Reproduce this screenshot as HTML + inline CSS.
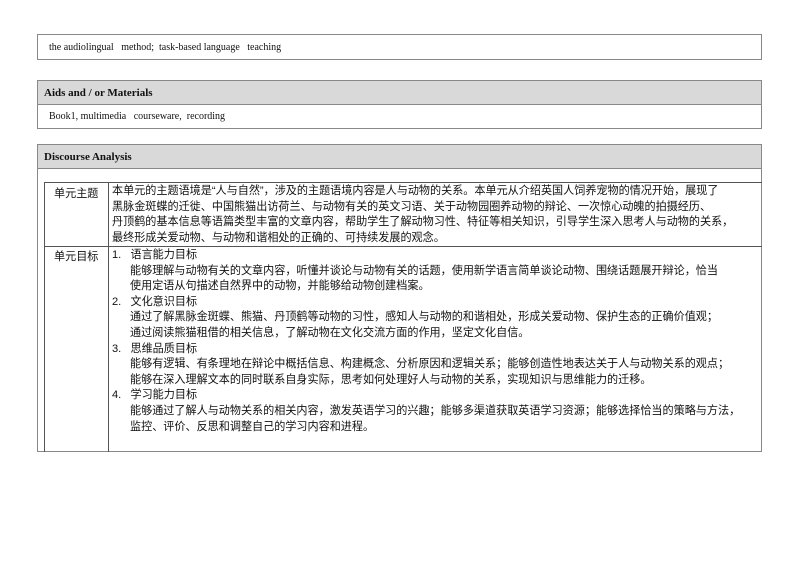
<!DOCTYPE html>
<html><head><meta charset="utf-8"><style>
body{margin:0;width:794px;height:561px;background:#fff;position:relative;font-family:"Liberation Serif","Noto Sans CJK SC",serif;color:#111}
.box{position:absolute;left:37px;width:725px;border:1px solid #888;box-sizing:border-box}
.hd{background:#d9d9d9;font-weight:bold;font-size:11px;padding-left:6px;border-bottom:1px solid #888;box-sizing:border-box}
.t{font-size:10px;padding-left:11px}
.cj{font-family:"Liberation Sans","Noto Sans CJK SC",sans-serif;font-size:11.1px;line-height:15.6px;color:#111}
.a{position:absolute}
</style></head><body>
<div class="box" style="top:34px;height:26px"><div class="t" style="line-height:25px">the audiolingual &nbsp; method; &nbsp;task-based language &nbsp; teaching</div></div>
<div class="box" style="top:80px;height:49px"><div class="hd" style="height:24px;line-height:25px">Aids and / or Materials</div><div class="t" style="line-height:24px">Book1, multimedia &nbsp; courseware, &nbsp;recording</div></div>
<div class="box" style="top:144px;height:308px">
<div class="hd" style="height:24px;line-height:24px">Discourse Analysis</div>
</div>
<div class="a" style="left:44px;top:182px;width:718px;height:270px;border-left:1px solid #555;border-top:1px solid #555;box-sizing:border-box"></div>
<div class="a" style="left:44px;top:246px;width:718px;border-top:1px solid #555"></div>
<div class="a" style="left:108px;top:182px;height:270px;border-left:1px solid #555"></div>
<div class="a cj" style="left:54px;top:187px">单元主题</div>
<div class="a cj" style="left:54px;top:250px">单元目标</div>
<div class="a cj" style="left:112px;top:184px;width:650px">本单元的主题语境是“人与自然”，涉及的主题语境内容是人与动物的关系。本单元从介绍英国人饲养宠物的情况开始，展现了<br>黑脉金斑蝶的迁徙、中国熊猫出访荷兰、与动物有关的英文习语、关于动物园圈养动物的辩论、一次惊心动魄的拍摄经历、<br>丹顶鹤的基本信息等语篇类型丰富的文章内容，帮助学生了解动物习性、特征等相关知识，引导学生深入思考人与动物的关系，<br>最终形成关爱动物、与动物和谐相处的正确的、可持续发展的观念。</div>
<div class="a cj" style="left:112px;top:248px;width:650px">
<div>1.&nbsp;&nbsp; 语言能力目标</div>
<div style="padding-left:18px">能够理解与动物有关的文章内容，听懂并谈论与动物有关的话题，使用新学语言简单谈论动物、围绕话题展开辩论，恰当<br>使用定语从句描述自然界中的动物，并能够给动物创建档案。</div>
<div>2.&nbsp;&nbsp; 文化意识目标</div>
<div style="padding-left:18px">通过了解黑脉金斑蝶、熊猫、丹顶鹤等动物的习性，感知人与动物的和谐相处，形成关爱动物、保护生态的正确价值观；<br>通过阅读熊猫租借的相关信息，了解动物在文化交流方面的作用，坚定文化自信。</div>
<div>3.&nbsp;&nbsp; 思维品质目标</div>
<div style="padding-left:18px">能够有逻辑、有条理地在辩论中概括信息、构建概念、分析原因和逻辑关系；能够创造性地表达关于人与动物关系的观点；<br>能够在深入理解文本的同时联系自身实际，思考如何处理好人与动物的关系，实现知识与思维能力的迁移。</div>
<div>4.&nbsp;&nbsp; 学习能力目标</div>
<div style="padding-left:18px">能够通过了解人与动物关系的相关内容，激发英语学习的兴趣；能够多渠道获取英语学习资源；能够选择恰当的策略与方法，<br>监控、评价、反思和调整自己的学习内容和进程。</div>
</div>
</body></html>
